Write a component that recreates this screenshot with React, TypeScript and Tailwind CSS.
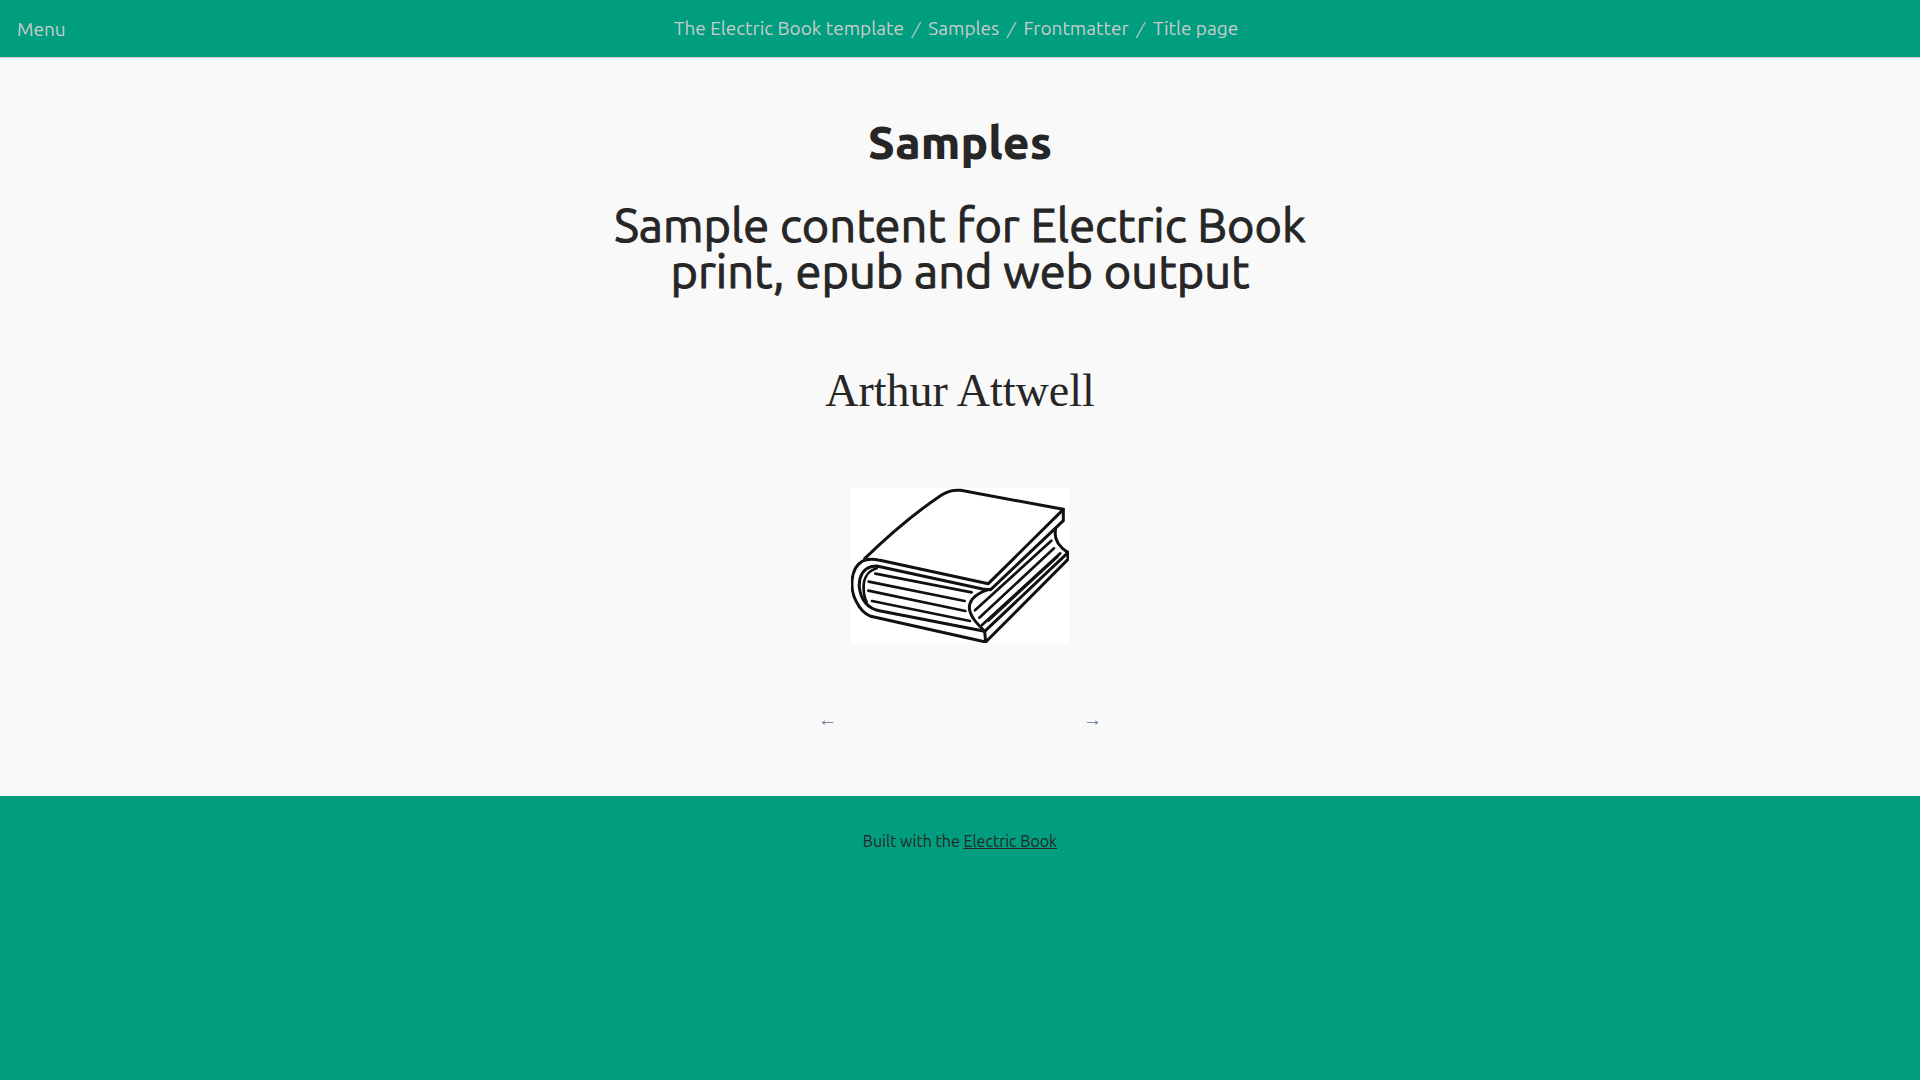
const crumbs = ['The Electric Book template', 'Samples', 'Frontmatter', 'Title page'];

function Book() {
  return (
    <svg
      viewBox="33 24 654 465"
      role="img"
      aria-label="Book"
      className="block h-auto w-[218px] bg-white"
      fill="none"
      stroke="#111"
      strokeWidth="9"
      strokeLinecap="round"
      strokeLinejoin="round"
    >
      <path d="M74 236 C148 164 228 96 306 44 Q332 28 362 31 L670 88 L445 311 L120 241 Q88 233 68 243 C28 266 30 330 49 365 Q65 398 92 409 L437 486 L684 238 V216" />
      <path d="M670 88 V122 L452 329 L428 327 L110 258 C66 258 56 295 58 322 Q62 352 76 368 Q92 387 118 392 L434 454 L684 218" />
      <path d="M110 265 C80 274 69 300 71 328 Q72 352 80 366" strokeWidth="8" />
      <path d="M434 454 L437 486" />
      <path d="M448 328 C415 337 389 356 388 382 C388 410 416 435 434 454" />
      <path d="M647 147 C641 174 654 199 684 218" />
      <path d="M106 281 L395 337 M86 305 L374 363 M85 332 L376 393 M96 363 L390 423" strokeWidth="8" />
      <path d="M405 391 L634 182 M418 413 L642 205 M426 435 L661 220" strokeWidth="8" />
      <path d="M446 424 L655 230" strokeWidth="4" />
      <path d="M677 216 H687 V228 Z" fill="#111" strokeWidth="3" />
    </svg>
  );
}

export default function App() {
  return (
    <div className="min-h-screen bg-[#009e7f] font-['Ubuntu','Noto_Sans',sans-serif] text-[#262626]">
      <header className="grid h-[58px] grid-cols-[1fr_auto_1fr] items-center border-b border-[#ccc] px-[17px] text-[19px] text-[#ccc]">
        <button type="button" className="justify-self-start pt-[2px]">Menu</button>
        <nav aria-label="Breadcrumb" className="pr-2">
          <ol className="flex">
            {crumbs.map((crumb, i) => (
              <li key={crumb}>
                {i > 0 && <span className="px-[9px] text-base italic">/</span>}
                <a href="#">{crumb}</a>
              </li>
            ))}
          </ol>
        </nav>
      </header>
      <main className="flex flex-col items-center bg-[#f9f9f9] px-4 pt-[61px] pb-16 text-center">
        <h1 className="text-[46px] leading-[46px] font-extrabold">Samples</h1>
        <p className="mt-[37px] max-w-[720px] text-[47px] leading-[46px] [-webkit-text-stroke:1px_#262626]">
          Sample content for Electric Book print, epub and web output
        </p>
        <p className="mt-[74px] font-['Liberation_Serif',serif] text-[46px] leading-[46px]">Arthur Attwell</p>
        <div className="mt-[74px]">
          <Book />
        </div>
        <nav aria-label="Pages" className="mt-[65px] flex w-[284px] justify-between font-['Liberation_Serif',serif] text-[19px] leading-6 text-[#5f7699]">
          <a href="#" aria-label="Previous page">←</a>
          <a href="#" aria-label="Next page">→</a>
        </nav>
      </main>
      <footer className="px-4 py-[33px] text-center text-base">
        Built with the <a href="#" className="underline">Electric Book</a>
      </footer>
    </div>
  );
}
